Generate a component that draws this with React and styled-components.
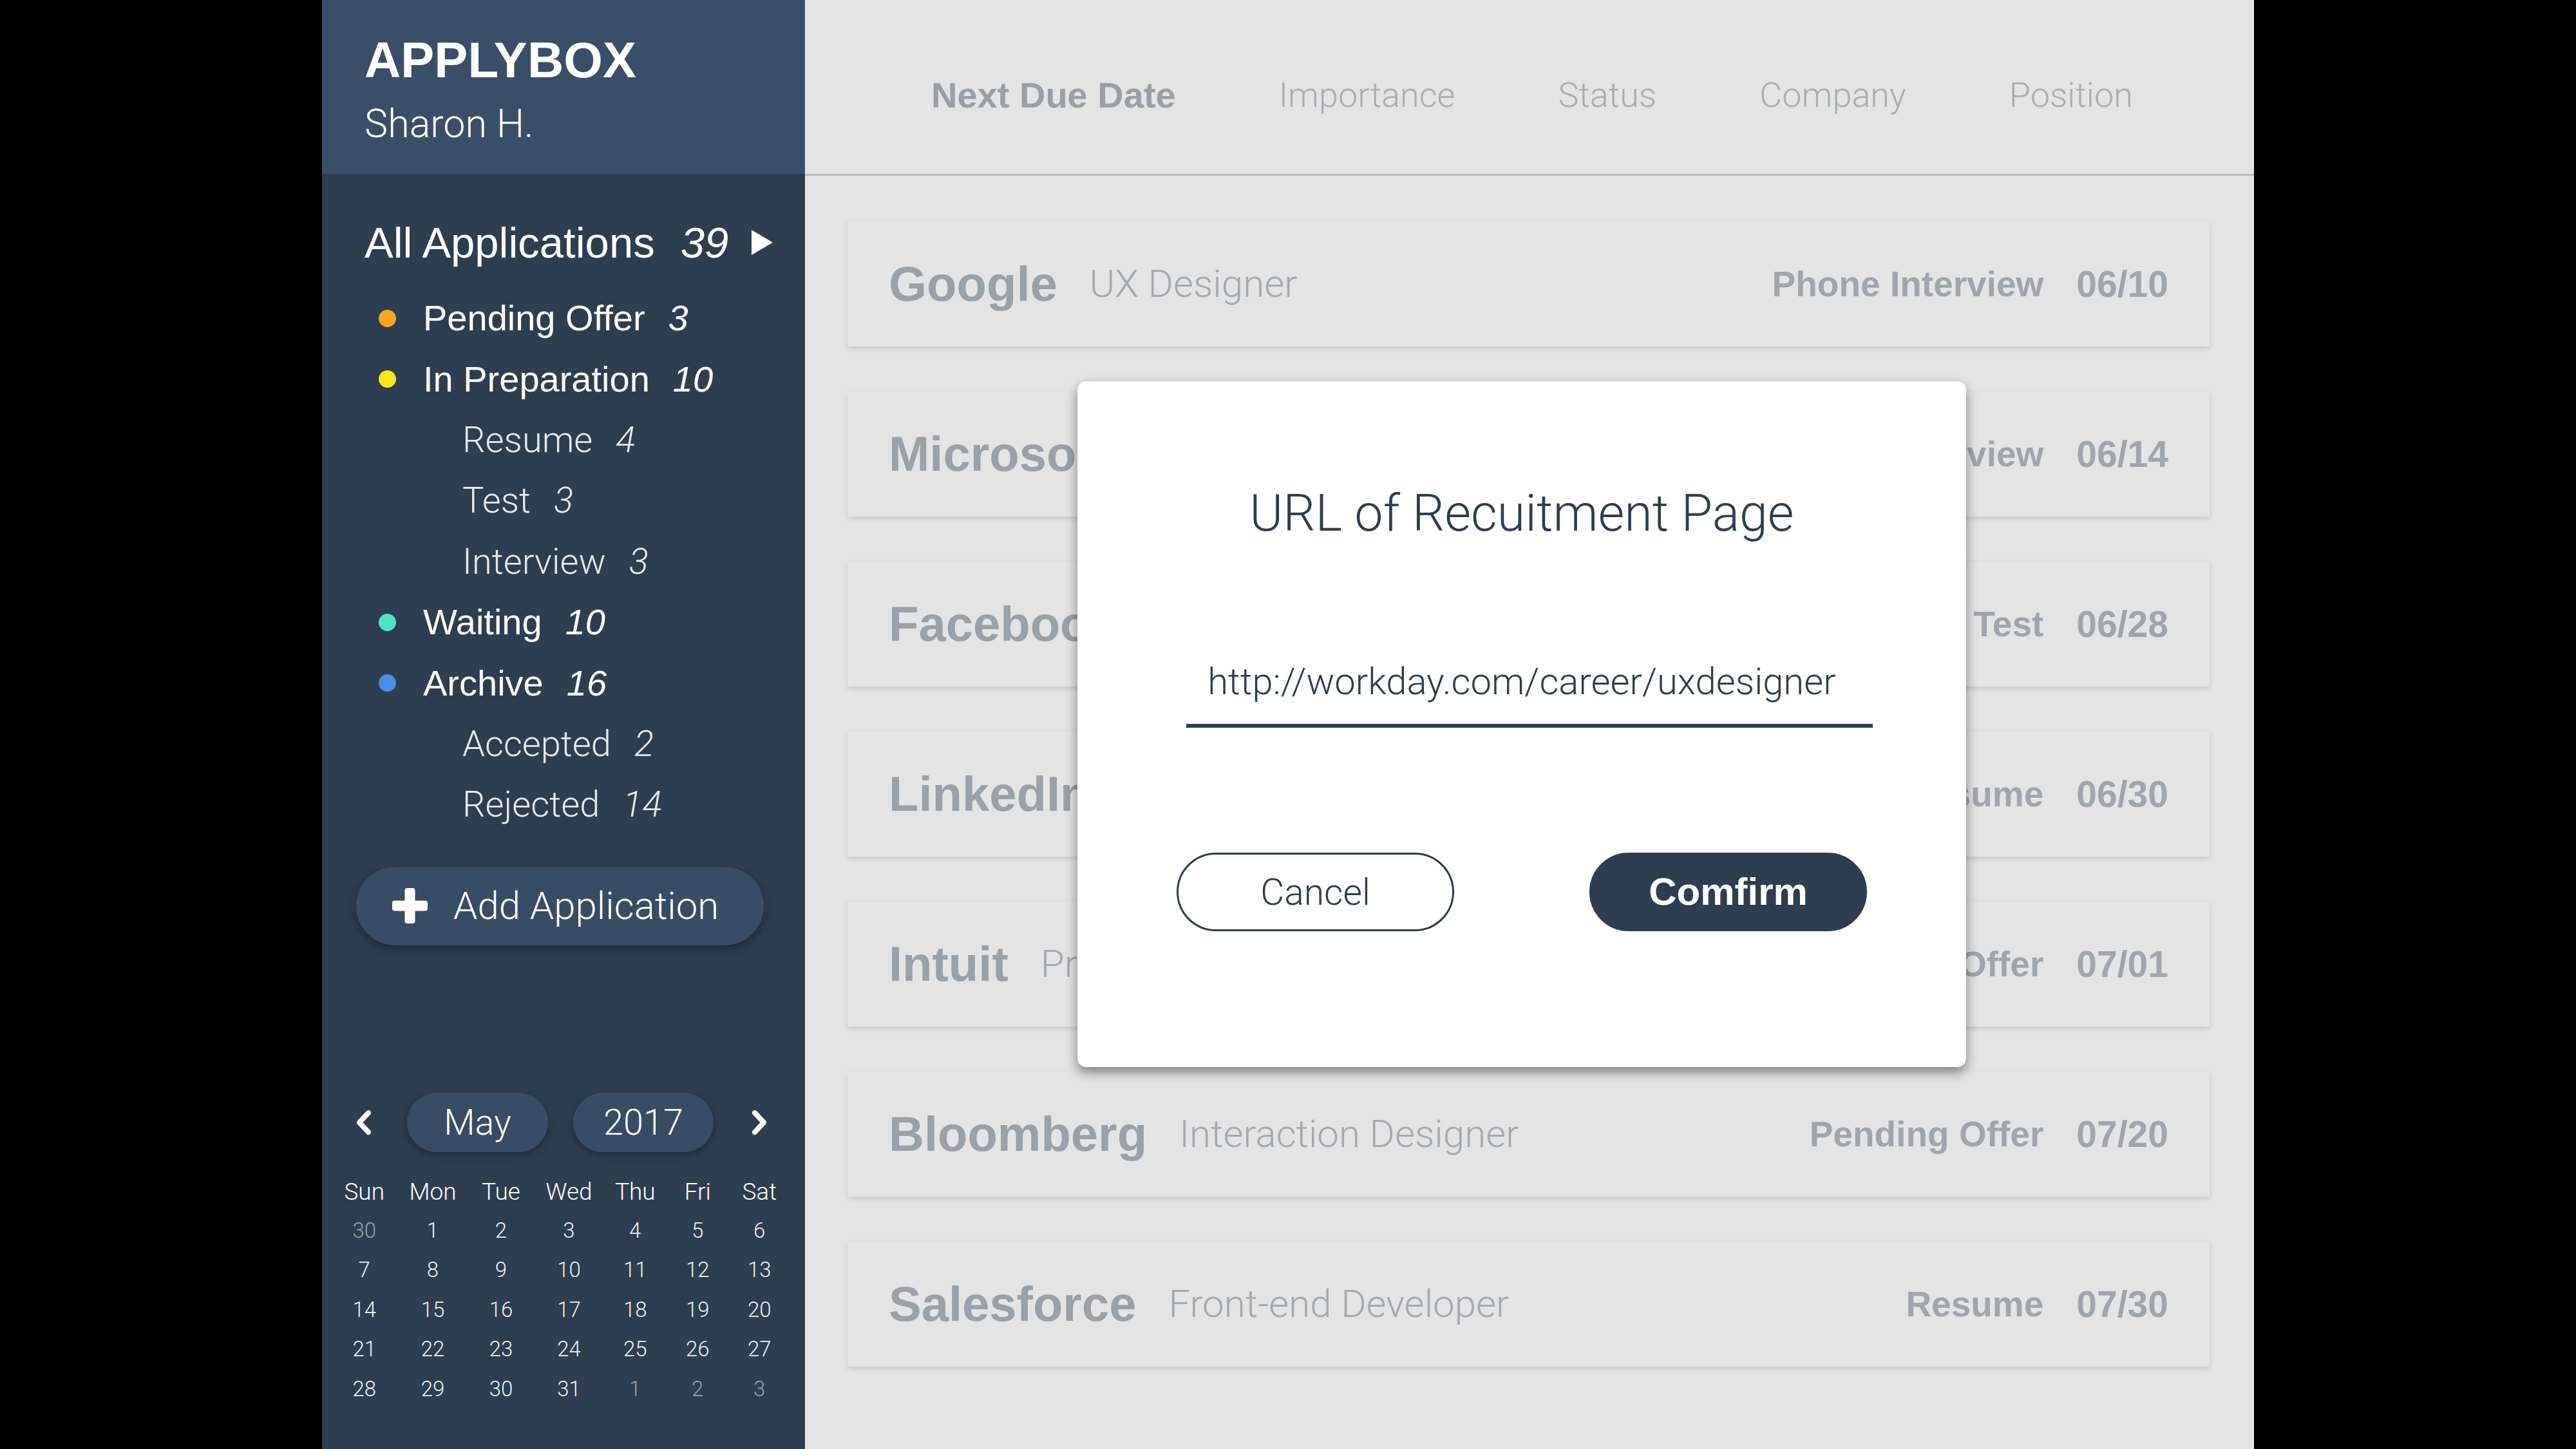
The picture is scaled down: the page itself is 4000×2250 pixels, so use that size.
import React from 'react';
import styled, { createGlobalStyle } from 'styled-components';

const SANS = `"Liberation Sans", Arial, sans-serif`;
const LIGHT = `"Roboto", "Liberation Sans", Arial, sans-serif`;
const NAVY = '#2c3e50';

const GlobalStyle = createGlobalStyle`
  html, body { margin: 0; padding: 0; background: #000; }
  * { box-sizing: border-box; }
`;

const Frame = styled.div`
  width: 3000px;
  height: 2250px;
  margin: 0 auto;
  display: flex;
  overflow: hidden;
  font-family: ${SANS};
`;

/* ---------- sidebar ---------- */

const Sidebar = styled.aside`
  width: 750px;
  flex-shrink: 0;
  background: #2d3e50;
  color: #fff;
  display: flex;
  flex-direction: column;
`;

const SideHeader = styled.div`
  height: 270px;
  background: #394f67;
  padding: 54px 0 0 66px;
`;

const Brand = styled.div`
  font-size: 78px;
  font-weight: 700;
  line-height: 1;
`;

const User = styled.div`
  margin-top: 30px;
  font-family: ${LIGHT};
  font-weight: 300;
  font-size: 61px;
  line-height: 1;
`;

const AllRow = styled.div`
  margin: 73px 0 0 66px;
  display: flex;
  align-items: center;
  font-size: 67px;
  line-height: 1;
  height: 66px;
`;

const Count = styled.span`
  font-style: italic;
  margin-left: ${(p) => p.$gap || 36}px;
  font-weight: ${(p) => (p.$light ? 300 : 400)};
`;

const Arrow = styled.svg`
  margin-left: 36px;
  width: 33px;
  height: 39px;
`;

const StatusList = styled.ul`
  list-style: none;
  margin: 38px 0 0 66px;
  padding: 0;
`;

const StatusRow = styled.li`
  height: 94.4px;
  display: flex;
  align-items: center;
  padding-left: ${(p) => (p.$sub ? 152 : 22)}px;
  font-size: 56px;
  line-height: 1;
  font-family: ${(p) => (p.$sub ? LIGHT : SANS)};
  font-weight: ${(p) => (p.$sub ? 300 : 400)};
  color: ${(p) => (p.$sub ? '#e6e9ec' : '#fff')};
`;

const Dot = styled.span`
  width: 27px;
  height: 27px;
  border-radius: 50%;
  background: ${(p) => p.$color};
  margin-right: 42px;
  flex-shrink: 0;
`;

const AddButton = styled.button`
  margin: 49px 0 0 53px;
  width: 633px;
  height: 122px;
  border: none;
  border-radius: 61px;
  background: #374d65;
  box-shadow: 0 6px 14px rgba(0, 0, 0, 0.35);
  color: #fff;
  display: flex;
  align-items: center;
  padding: 0 0 0 56px;
  font-family: ${LIGHT};
  font-weight: 300;
  font-size: 60px;
  line-height: 1;
  gap: 40px;
`;

const Calendar = styled.div`
  margin: 229px 0 0 13px;
  width: 718px;
`;

const CalNav = styled.div`
  height: 92px;
  display: flex;
  align-items: center;
  padding-left: 38px;
`;

const Chevron = styled.svg`
  width: 27px;
  height: 42px;
  flex-shrink: 0;
`;

const Pill = styled.div`
  width: ${(p) => p.$w}px;
  height: 92px;
  margin: 0 ${(p) => p.$right}px 0 ${(p) => p.$left}px;
  border-radius: 46px;
  background: #374d65;
  box-shadow: 0 5px 12px rgba(0, 0, 0, 0.3);
  display: flex;
  align-items: center;
  justify-content: center;
  font-family: ${LIGHT};
  font-weight: 300;
  font-size: 56px;
  line-height: 1;
`;

const DayGrid = styled.div`
  margin-top: 30px;
  display: grid;
  grid-template-columns: 105.5px 107px 105px 106px 99.5px 94.5px 97.5px;
  grid-auto-rows: 61.4px;
`;

const WeekDay = styled.div`
  display: flex;
  align-items: center;
  justify-content: center;
  font-family: ${LIGHT};
  font-weight: 300;
  font-size: 37px;
  height: 64px;
  color: #fff;
`;

const Day = styled.div`
  display: flex;
  align-items: center;
  justify-content: center;
  font-family: ${LIGHT};
  font-weight: 300;
  font-size: 33px;
  color: ${(p) => (p.$muted ? '#97a2ad' : '#eef0f2')};
`;

/* ---------- main ---------- */

const Main = styled.main`
  flex: 1;
  background: #e4e4e4;
  position: relative;
  display: flex;
  flex-direction: column;
`;

const SortBar = styled.nav`
  height: 273px;
  border-bottom: 3px solid #b9bec4;
  display: flex;
  align-items: flex-start;
  padding: 120px 0 0 196px;
  gap: 160px;
`;

const SortItem = styled.span`
  font-size: ${(p) => (p.$active ? 56 : 54)}px;
  line-height: 1;
  margin-top: ${(p) => (p.$active ? 0 : 1)}px;
  font-family: ${(p) => (p.$active ? SANS : LIGHT)};
  font-weight: ${(p) => (p.$active ? 700 : 300)};
  color: ${(p) => (p.$active ? '#9aa0a6' : '#a9aeb3')};
`;

const CardList = styled.div`
  padding: 71px 69px 0 66px;
  display: flex;
  flex-direction: column;
  gap: 70px;
`;

const Card = styled.div`
  height: 194px;
  background: #e4e4e4;
  box-shadow: 0 3px 8px rgba(0, 0, 0, 0.13);
  display: flex;
  align-items: center;
  padding: 0 64px;
  color: #9aa1a8;
  line-height: 1;
`;

const Company = styled.span`
  font-size: 76px;
  font-weight: 700;
`;

const Role = styled.span`
  margin-left: 50px;
  font-family: ${LIGHT};
  font-weight: 300;
  font-size: 60px;
  color: #a4aab0;
  flex: 1;
`;

const Stage = styled.span`
  font-size: 55px;
  font-weight: 700;
  color: #a0a6ac;
`;

const DueDate = styled.span`
  margin-left: 51px;
  font-size: 57px;
  font-weight: 700;
  color: #a0a6ac;
`;

/* ---------- dialog ---------- */

const Dialog = styled.div`
  position: absolute;
  left: 423px;
  top: 592px;
  width: 1380px;
  height: 1065px;
  background: #fff;
  border-radius: 14px;
  box-shadow: 0 8px 18px rgba(0, 0, 0, 0.45);
  padding-top: 166px;
  display: flex;
  flex-direction: column;
  align-items: center;
  color: ${NAVY};
`;

const DialogTitle = styled.h2`
  margin: 0;
  font-family: ${LIGHT};
  font-weight: 300;
  font-size: 79px;
  line-height: 1;
`;

const UrlField = styled.div`
  margin: 192px 0 0 24px;
  width: 1066px;
  padding: 0 24px 37px 0;
  border-bottom: 6px solid ${NAVY};
  text-align: center;
  font-family: ${LIGHT};
  font-weight: 300;
  font-size: 58px;
  line-height: 1;
`;

const Actions = styled.div`
  margin-top: 194px;
  display: flex;
  gap: 210px;
`;

const ActionButton = styled.button`
  width: 431px;
  height: 122px;
  border-radius: 61px;
  border: 3px solid ${NAVY};
  background: ${(p) => (p.$primary ? NAVY : '#fff')};
  color: ${(p) => (p.$primary ? '#fff' : NAVY)};
  font-family: ${(p) => (p.$primary ? SANS : LIGHT)};
  font-weight: ${(p) => (p.$primary ? 700 : 300)};
  font-size: ${(p) => (p.$primary ? 60 : 57)}px;
  line-height: 1;
`;

const statuses = [
  { label: 'Pending Offer', count: 3, color: '#f5a623' },
  { label: 'In Preparation', count: 10, color: '#f8e71c' },
  { label: 'Resume', count: 4, sub: true },
  { label: 'Test', count: 3, sub: true },
  { label: 'Interview', count: 3, sub: true },
  { label: 'Waiting', count: 10, color: '#50e3c2' },
  { label: 'Archive', count: 16, color: '#4a90e2' },
  { label: 'Accepted', count: 2, sub: true },
  { label: 'Rejected', count: 14, sub: true },
];

const weekDays = ['Sun', 'Mon', 'Tue', 'Wed', 'Thu', 'Fri', 'Sat'];

const days = [
  [30, true], [1], [2], [3], [4], [5], [6],
  [7], [8], [9], [10], [11], [12], [13],
  [14], [15], [16], [17], [18], [19], [20],
  [21], [22], [23], [24], [25], [26], [27],
  [28], [29], [30], [31], [1, true], [2, true], [3, true],
];

const applications = [
  { company: 'Google', role: 'UX Designer', stage: 'Phone Interview', due: '06/10' },
  { company: 'Microsoft', role: 'Product Designer', stage: 'Phone Interview', due: '06/14' },
  { company: 'Facebook', role: 'Product Designer', stage: 'Test', due: '06/28' },
  { company: 'LinkedIn', role: 'UX Designer', stage: 'Resume', due: '06/30' },
  { company: 'Intuit', role: 'Product Designer', stage: 'Pending Offer', due: '07/01' },
  { company: 'Bloomberg', role: 'Interaction Designer', stage: 'Pending Offer', due: '07/20' },
  { company: 'Salesforce', role: 'Front-end Developer', stage: 'Resume', due: '07/30' },
];

const sorts = ['Next Due Date', 'Importance', 'Status', 'Company', 'Position'];

const ChevronIcon = ({ dir }) => (
  <Chevron viewBox="0 0 27 42">
    <polyline
      points={dir === 'left' ? '21,6 7,21 21,36' : '6,6 20,21 6,36'}
      fill="none"
      stroke="#fff"
      strokeWidth="8"
      strokeLinecap="round"
      strokeLinejoin="round"
    />
  </Chevron>
);

const PlusIcon = () => (
  <svg width="55" height="55" viewBox="0 0 55 55">
    <rect x="19.5" y="0" width="16" height="55" rx="4" fill="#fff" />
    <rect x="0" y="19.5" width="55" height="16" rx="4" fill="#fff" />
  </svg>
);

export default function App() {
  return (
    <>
      <GlobalStyle />
      <Frame>
        <Sidebar>
          <SideHeader>
            <Brand>APPLYBOX</Brand>
            <User>Sharon H.</User>
          </SideHeader>

          <AllRow>
            All Applications
            <Count $gap={40}>39</Count>
            <Arrow viewBox="0 0 33 39">
              <polygon points="0,0 33,19.5 0,39" fill="#fff" />
            </Arrow>
          </AllRow>

          <StatusList>
            {statuses.map((s) => (
              <StatusRow key={s.label} $sub={s.sub}>
                {!s.sub && <Dot $color={s.color} />}
                {s.label}
                <Count $light={s.sub}>{s.count}</Count>
              </StatusRow>
            ))}
          </StatusList>

          <AddButton>
            <PlusIcon />
            Add Application
          </AddButton>

          <Calendar>
            <CalNav>
              <ChevronIcon dir="left" />
              <Pill $w={219} $left={54} $right={39}>May</Pill>
              <Pill $w={218} $left={0} $right={58}>2017</Pill>
              <ChevronIcon dir="right" />
            </CalNav>
            <DayGrid>
              {weekDays.map((d) => (
                <WeekDay key={d}>{d}</WeekDay>
              ))}
              {days.map(([n, muted], i) => (
                <Day key={i} $muted={muted}>{n}</Day>
              ))}
            </DayGrid>
          </Calendar>
        </Sidebar>

        <Main>
          <SortBar>
            {sorts.map((s, i) => (
              <SortItem key={s} $active={i === 0}>{s}</SortItem>
            ))}
          </SortBar>

          <CardList>
            {applications.map((a) => (
              <Card key={a.company}>
                <Company>{a.company}</Company>
                <Role>{a.role}</Role>
                <Stage>{a.stage}</Stage>
                <DueDate>{a.due}</DueDate>
              </Card>
            ))}
          </CardList>

          <Dialog>
            <DialogTitle>URL of Recuitment Page</DialogTitle>
            <UrlField>http://workday.com/career/uxdesigner</UrlField>
            <Actions>
              <ActionButton>Cancel</ActionButton>
              <ActionButton $primary>Comfirm</ActionButton>
            </Actions>
          </Dialog>
        </Main>
      </Frame>
    </>
  );
}
